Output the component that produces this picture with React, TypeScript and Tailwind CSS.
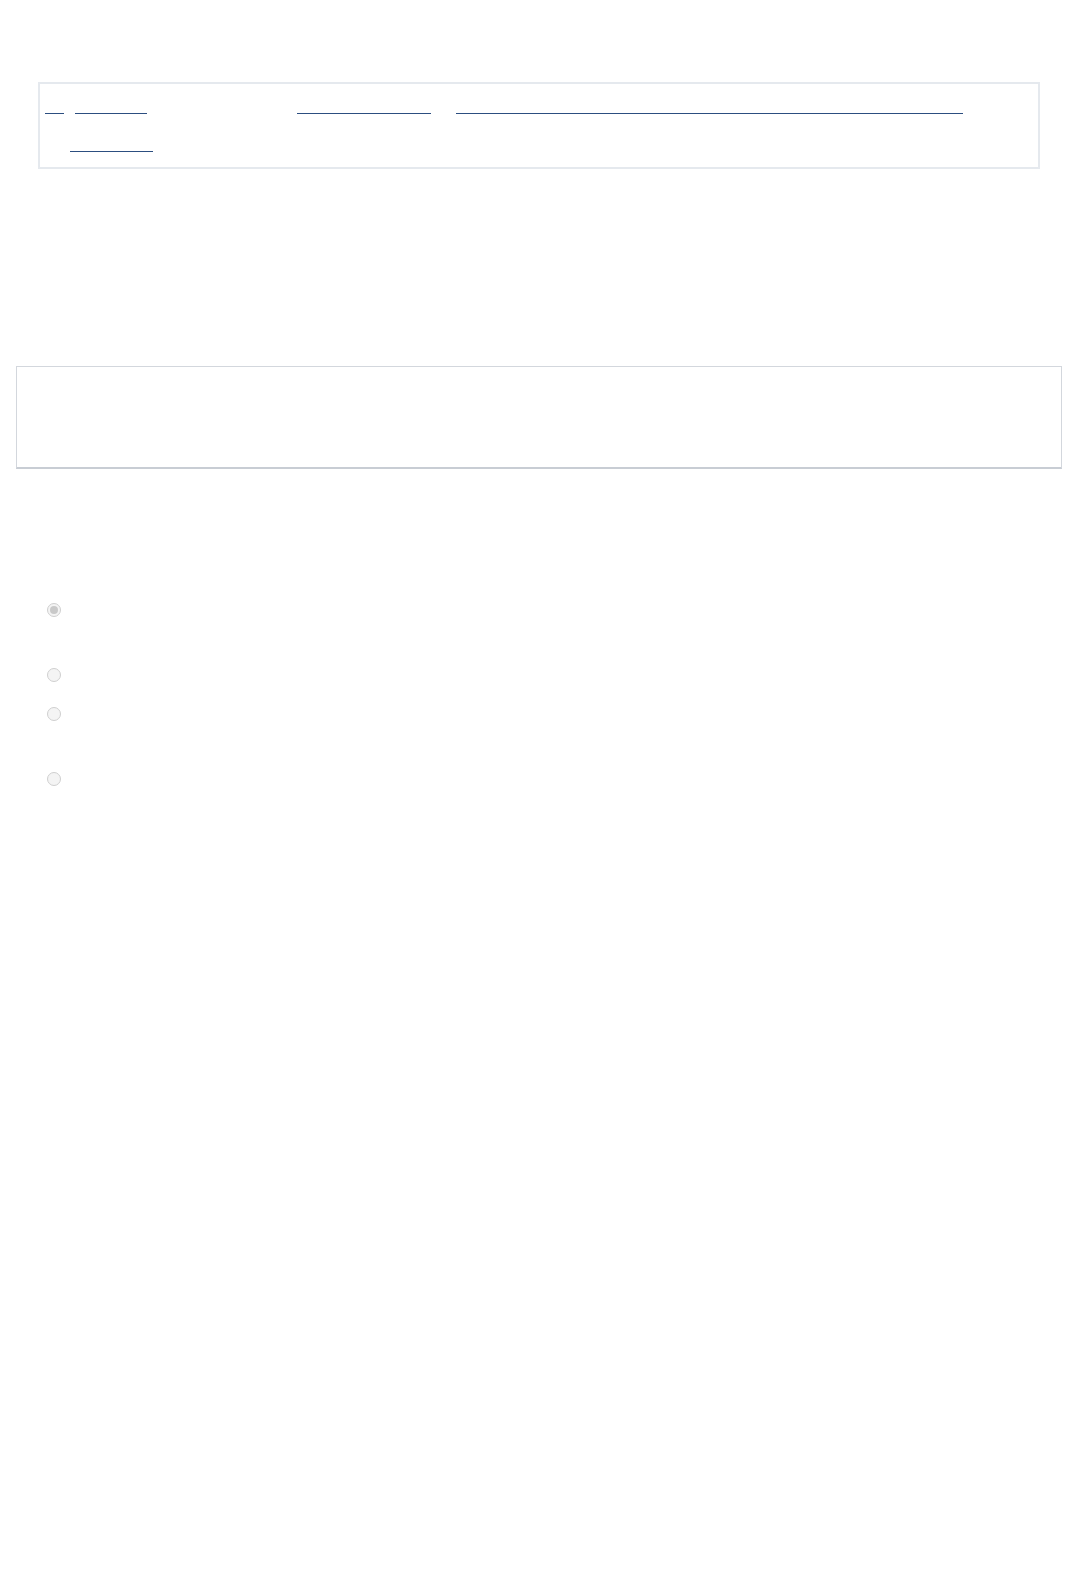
import React from 'react';

interface LinkRowProps {
  links: { offset: number; width: number }[];
  className?: string;
}

// links whose text is blank: only the underline is left to see
const LinkRow: React.FC<LinkRowProps> = ({ links, className = '' }) => (
  <div className={`flex h-px ${className}`}>
    {links.map((link, index) => (
      <span
        key={index}
        className="block h-px bg-[#2c4e80] shrink-0"
        style={{ marginLeft: link.offset, width: link.width }}
      />
    ))}
  </div>
);

interface RadioProps {
  checked?: boolean;
}

const Radio: React.FC<RadioProps> = ({ checked = false }) => (
  <span className="flex items-center justify-center w-[14px] h-[14px] rounded-full border border-[#cfcfcf] bg-[#f4f4f4] shrink-0">
    {checked && <span className="block w-[8px] h-[8px] rounded-full bg-[#c9c9c9]" />}
  </span>
);

const App: React.FC = () => {
  return (
    <div className="min-h-[1570px] bg-white font-['Liberation_Sans',Arial,sans-serif]">
      <div className="pt-[82px] pl-[38px] pr-[38px]">
        <nav className="h-[87px] border-2 border-[#e5e9ee]">
          <LinkRow
            className="mt-[29px]"
            links={[
              { offset: 5, width: 19 },
              { offset: 11, width: 72 },
              { offset: 150, width: 134 },
              { offset: 25, width: 507 },
            ]}
          />
          <LinkRow className="mt-[37px]" links={[{ offset: 30, width: 83 }]} />
        </nav>
      </div>

      <div className="pt-[197px] pl-[16px] pr-[16px]">
        <section className="h-[103px] border border-b-2 border-[#d3d7dd] border-b-[#c8cdd4]" />
      </div>

      <div className="pt-[134px] pl-[47px] flex flex-col">
        <Radio checked />
        <div className="mt-[51px]">
          <Radio />
        </div>
        <div className="mt-[25px]">
          <Radio />
        </div>
        <div className="mt-[51px]">
          <Radio />
        </div>
      </div>
    </div>
  );
};

export default App;
